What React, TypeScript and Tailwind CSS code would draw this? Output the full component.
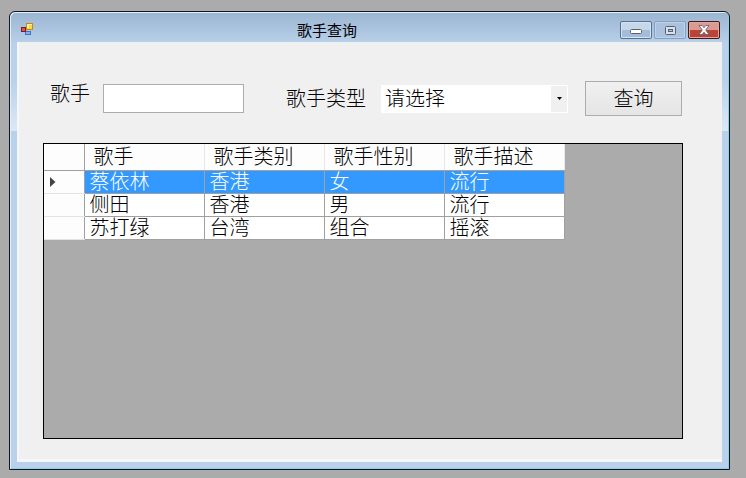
import React from 'react';

const columns = ['歌手', '歌手类别', '歌手性别', '歌手描述'];

const singers = [
  ['蔡依林', '香港', '女', '流行'],
  ['侧田', '香港', '男', '流行'],
  ['苏打绿', '台湾', '组合', '摇滚'],
];

function FormIcon() {
  return (
    <svg width="14" height="14" viewBox="0 0 14 14" aria-hidden="true">
      <rect x="5.5" y="8.5" width="5" height="3" fill="#7fb2ee" stroke="#3f72c4" />
      <rect x="1.5" y="4.5" width="4" height="4" fill="#d8574c" stroke="#7c1c20" />
      <rect x="6.5" y="0.5" width="6" height="6" fill="#ffd83a" stroke="#c08a1c" />
      <path d="M7 1h5v1H9v3H7z" fill="#fff2a0" />
    </svg>
  );
}

function TitleBar() {
  return (
    <header className="flex h-[30px] items-center justify-between pr-0.5 pl-[3px]">
      <div className="flex pt-1.5">
        <FormIcon />
      </div>
      <h1 className="flex-1 pt-2 text-center text-[15px] leading-5 font-normal">歌手查询</h1>
      <div className="flex gap-0.5 pt-1.5">
        <button type="button" aria-label="最小化" className="flex h-[18px] w-8 items-center justify-center rounded-xs border border-[#56718f] bg-linear-to-b from-[#c6d7ea] from-50% to-[#a3bcd9] to-50% shadow-[inset_0_0_0_1px_#d5e3f2]">
          <svg width="12" height="8" viewBox="0 0 12 8"><rect x="0.5" y="3.5" width="11" height="4" rx="1" fill="#fff" stroke="#56616e" /></svg>
        </button>
        <button type="button" aria-label="最大化" className="flex h-[18px] w-8 items-center justify-center rounded-xs border border-[#849fc0] bg-[#aac2de] shadow-[inset_0_0_0_1px_#bfd2e8]">
          <svg width="11" height="9" viewBox="0 0 11 9"><rect x="0.5" y="0.5" width="10" height="8" rx="1" fill="#d8e1ed" stroke="#56616e" /><rect x="3.5" y="3.5" width="4" height="2" fill="#aac2de" stroke="#56616e" /></svg>
        </button>
        <button type="button" aria-label="关闭" className="flex h-[18px] w-8 items-center justify-center rounded-xs border border-[#43181b] bg-linear-to-b from-[#dd9a90] from-50% to-[#bb4438] to-50% shadow-[inset_0_0_0_1px_#e3a79d]">
          <svg width="12" height="10" viewBox="0 0 12 10"><path d="M1 .5h3.2L6 2.7 7.8.5H11L7.7 5 11 9.5H7.8L6 7.3 4.2 9.5H1L4.3 5z" fill="#fff" stroke="#565b66" strokeWidth="0.8" /></svg>
        </button>
      </div>
    </header>
  );
}

function SearchForm() {
  return (
    <form className="flex h-[35px] items-center pl-[7px]" onSubmit={(e) => e.preventDefault()}>
      <label htmlFor="singer" className="self-start leading-[26px]">歌手</label>
      <input id="singer" type="text" className="mr-[42px] ml-[13px] h-[29px] w-[141px] border border-[#abadb3] bg-white px-1" />
      <label htmlFor="kind" className="leading-7">歌手类型</label>
      <div className="relative mr-[17px] ml-[15px]">
        <select id="kind" className="block h-7 w-[187px] appearance-none bg-white pl-1 leading-7">
          <option>请选择</option>
        </select>
        <span className="pointer-events-none absolute inset-y-px right-px flex w-4 items-center justify-center bg-[#f0f0f0]">
          <svg width="5" height="3" viewBox="0 0 5 3"><path d="M0 0h5L2.5 3z" fill="#000" /></svg>
        </span>
      </div>
      <button type="submit" className="h-[35px] w-[97px] border border-[#acacac] bg-linear-to-b from-[#f0f0f0] to-[#e5e5e5] leading-7">查询</button>
    </form>
  );
}

function SingerTable() {
  return (
    <table className="table-fixed border-collapse bg-white text-left leading-[22px]">
      <colgroup>
        <col className="w-10" />
        {columns.map((name) => (
          <col key={name} className="w-[120px]" />
        ))}
      </colgroup>
      <thead>
        <tr className="h-[26px] bg-[#fdfdfd]">
          <td className="border-r border-b border-[#a0a0a0]" />
          {columns.map((name) => (
            <th key={name} scope="col" className="border-r border-b border-r-[#e8e8e8] border-b-[#a0a0a0] p-0 pl-[9px] font-light">{name}</th>
          ))}
        </tr>
      </thead>
      <tbody>
        {singers.map((row, i) => (
          <tr key={row[0]} className={i === 0 ? 'h-[23px] bg-[#3399ff] text-white' : 'h-[23px]'}>
            <td className="border-r border-b border-r-[#a0a0a0] border-b-[#e3e3e3] bg-[#fdfdfd] p-0 pl-1.5">
              {i === 0 && (
                <svg width="6" height="10" viewBox="0 0 6 10"><path d="M0 0l5.5 5L0 10z" fill="#444" /></svg>
              )}
            </td>
            {row.map((cell, j) => (
              <td key={j} className="border-r border-b border-[#a0a0a0] p-0 pl-[5px]">{cell}</td>
            ))}
          </tr>
        ))}
      </tbody>
    </table>
  );
}

export default function App() {
  return (
    <div className="flex min-h-screen bg-[#ababab] pt-[11px] pr-4 pb-2 pl-[9px] font-['Liberation_Sans','Noto_Sans_CJK_SC',sans-serif] text-xl font-light text-black">
      <div className="flex flex-1 flex-col rounded-t-md border border-[#0c1a28] bg-[linear-gradient(#9bb4d1,#b9d1ea_7%,#b9d1ea_15%,#dbe9f6_26%,#b9d1ea_26%)] px-[7px] pb-[7px] shadow-[inset_1px_1px_0_#e4eef8,inset_-1px_-1px_0_#8fd0e0]">
        <TitleBar />
        <main className="flex flex-1 flex-col gap-[27px] bg-[#f0f0f0] pt-[39px] pr-[39px] pb-[23px] pl-[26px] shadow-[inset_2px_-3px_0_#f5f8fb]">
          <SearchForm />
          <section className="flex-1 border border-black bg-[#ababab]">
            <SingerTable />
          </section>
        </main>
      </div>
    </div>
  );
}
